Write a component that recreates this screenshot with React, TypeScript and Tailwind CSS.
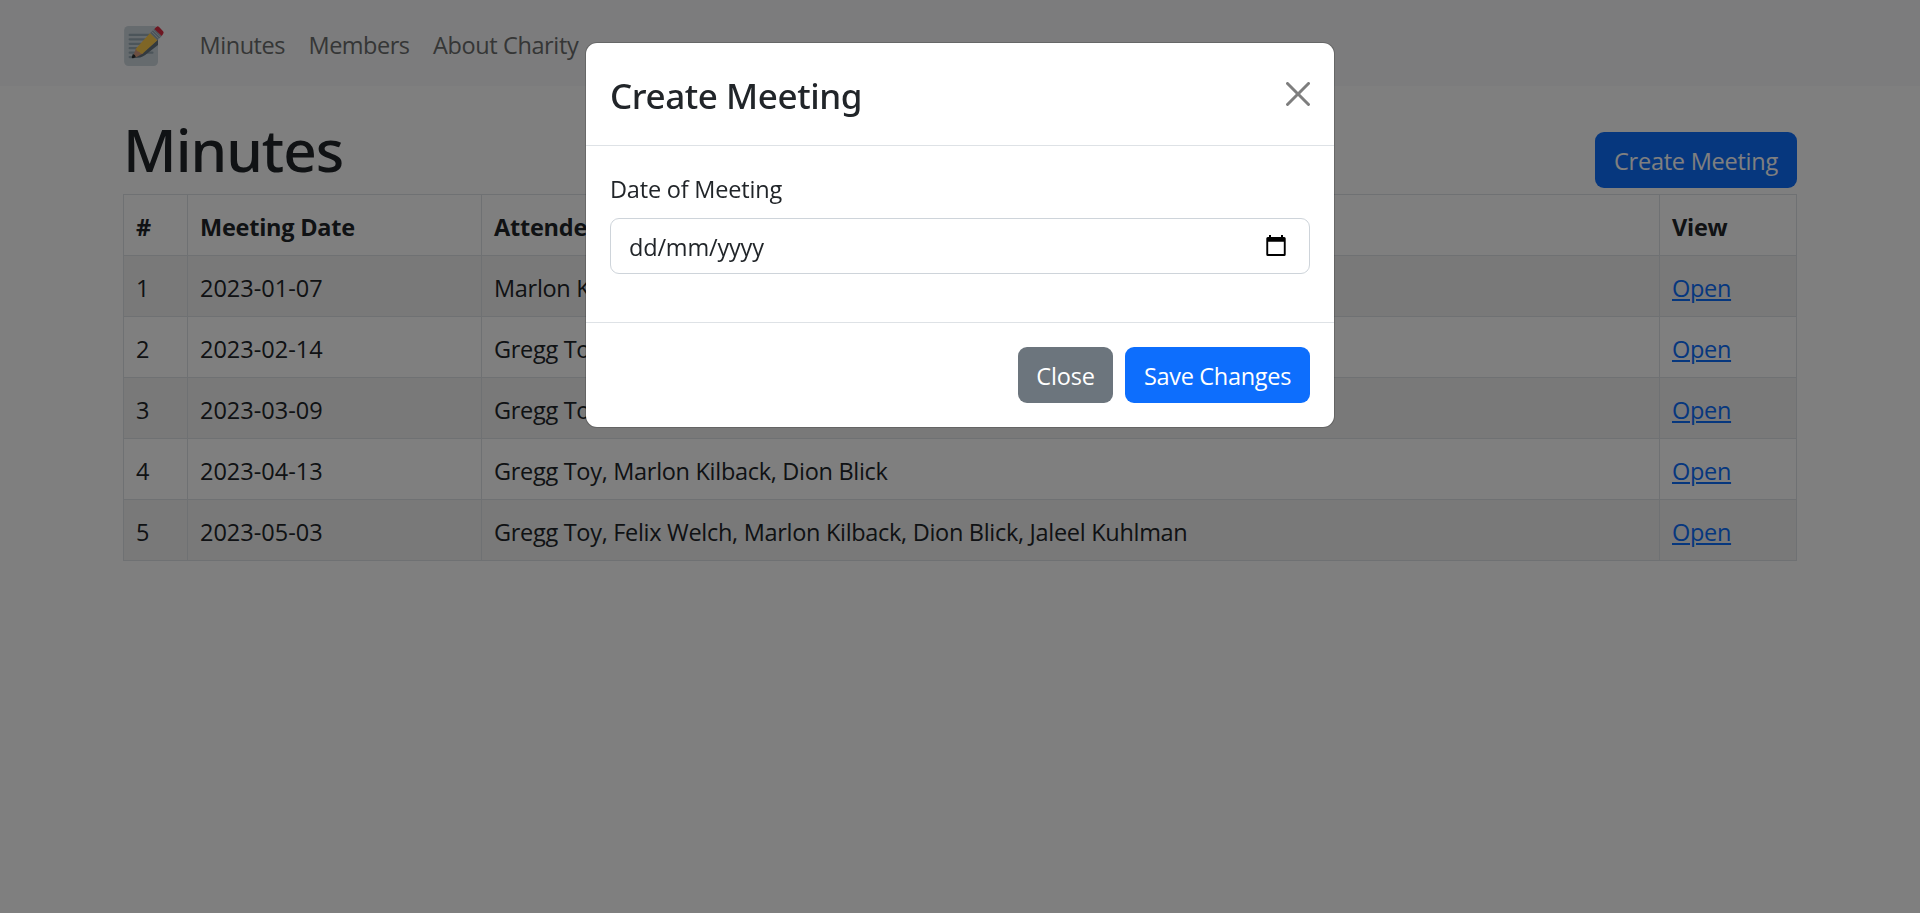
interface Meeting {
  id: number;
  date: string;
  attendees: string;
}

const meetings: Meeting[] = [
  { id: 1, date: '2023-01-07', attendees: 'Marlon Kilback, Dion Blick' },
  { id: 2, date: '2023-02-14', attendees: 'Gregg Toy, Felix Welch' },
  { id: 3, date: '2023-03-09', attendees: 'Gregg Toy, Dion Blick' },
  { id: 4, date: '2023-04-13', attendees: 'Gregg Toy, Marlon Kilback, Dion Blick' },
  { id: 5, date: '2023-05-03', attendees: 'Gregg Toy, Felix Welch, Marlon Kilback, Dion Blick, Jaleel Kuhlman' },
];

function MemoLogo() {
  return (
    <svg className="h-10 w-10 shrink-0" viewBox="0 0 36 36" overflow="visible" aria-hidden="true">
      <rect x="1" y="0" width="30.5" height="36" rx="4" fill="#ccd6dd" />
      <g stroke="#99aab5" strokeWidth="2" strokeLinecap="round">
        <path d="M6 8h18M6 12h14M6 16h10M6 20h8M6 24h20.5M6 28h4" />
      </g>
      <path d="M9.5 28.8 18 23.5 30.6 12.8 31.5 12v5.2L20 26.2q-2.4 1.8-4.6 2.2z" fill="#66757f" />
      <path d="M8.7 28.4 11.7 20 18.4 24.6 12.2 28z" fill="#d99e82" />
      <path d="M11.5 20.4 24.4 6.2 31 12.8 18 24.6q-1.8 1.3-3.2-1.1-2.6-.4-3.3-3.1z" fill="#ffcc4d" />
      <path d="M24.4 6.2 28.2 2.6 34.8 9 31 12.8z" fill="#99aab5" />
      <path d="M25.8 5 32.3 11.5M27.2 3.6 33.7 10.1" stroke="#ccd6dd" strokeWidth=".9" />
      <path d="M28.2 2.6 30 .8q1.2-1 2.5.1l3.6 3.8q1 1.2 0 2.4L34.8 9z" fill="#dd2e44" />
      <path d="M8.2 28.9q-.5-.3-.2-1.3l.9-2.5q2.2.5 2.6 2.8-2.5 1.5-3.3 1z" fill="#292f33" />
    </svg>
  );
}

function CalendarIcon() {
  return (
    <svg className="mb-px h-[21px] w-5" viewBox="0 0 20 21" aria-hidden="true">
      <path
        fillRule="evenodd"
        d="M3 0h2v2h10V0h2v2h1.2q1.5 0 1.5 1.5v16q0 1.5-1.5 1.5H1.8Q.3 21 .3 19.5v-16Q.3 2 1.800 2H3zM2.2 6.8V19h15.6V6.8z"
      />
    </svg>
  );
}

function CloseIcon() {
  return (
    <svg className="h-6 w-6" viewBox="0 0 16 16" aria-hidden="true">
      <path d="M.293.293a1 1 0 0 1 1.414 0L8 6.586 14.293.293a1 1 0 1 1 1.414 1.414L9.414 8l6.293 6.293a1 1 0 0 1-1.414 1.414L8 9.414l-6.293 6.293a1 1 0 0 1-1.414-1.414L6.586 8 .293 1.707a1 1 0 0 1 0-1.414z" />
    </svg>
  );
}

function Navbar() {
  return (
    <header className="h-[86px] bg-[#f8f9fa] pl-[123px]">
      <div className="flex h-full items-center pt-[6px]">
        <div className="w-[76.5px]">
          <MemoLogo />
        </div>
        <nav className="flex pb-[3px] text-[#6b6c6c]">
          <a href="#" className="w-[109px] whitespace-nowrap tracking-[-0.45px]">Minutes</a>
          <a href="#" className="w-[124.5px] whitespace-nowrap tracking-[-0.5px]">Members</a>
          <a href="#" className="whitespace-nowrap tracking-[-0.38px]">About Charity</a>
        </nav>
      </div>
    </header>
  );
}

function MeetingsTable() {
  return (
    <table className="w-[1674px] table-fixed border-collapse text-left [&_td]:h-[61px] [&_td]:border [&_td]:border-[#dee2e6] [&_td]:px-3 [&_td]:pt-[3px] [&_th]:h-[61px] [&_th]:border [&_th]:border-[#dee2e6] [&_th]:px-3 [&_th]:pt-[3px]">
      <colgroup>
        <col className="w-16" />
        <col className="w-[294px]" />
        <col />
        <col className="w-[137px]" />
      </colgroup>
      <thead className="tracking-[-0.24px]">
        <tr>
          <th>#</th>
          <th>Meeting Date</th>
          <th>Attendees</th>
          <th>View</th>
        </tr>
      </thead>
      <tbody>
        {meetings.map((m) => (
          <tr key={m.id} className="odd:bg-[#f2f2f2]">
            <td>{m.id}</td>
            <td>{m.date}</td>
            <td className="tracking-[-0.3px]">{m.attendees}</td>
            <td className="tracking-[-0.3px]">
              <a href="#" className="text-[#0d6efd] underline decoration-2 underline-offset-2">Open</a>
            </td>
          </tr>
        ))}
      </tbody>
    </table>
  );
}

function CreateMeetingModal() {
  return (
    <div className="fixed inset-0 flex items-start justify-center bg-black/50 pt-[42px]">
      <div
        role="dialog"
        className="flex h-[386px] w-[750px] flex-col rounded-[12px] border border-black/[.175] bg-white bg-clip-padding"
      >
        <div className="flex h-[103px] items-center justify-between border-b border-[#dee2e6] px-6">
          <h2 className="pt-1 font-['Noto_Sans',sans-serif] text-[35px] font-medium leading-[54px] tracking-[-0.42px]">
            Create Meeting
          </h2>
          <button type="button" aria-label="Close" className="opacity-50">
            <CloseIcon />
          </button>
        </div>
        <div className="flex-1 px-6 pt-[25px]">
          <label className="mb-[11px] block tracking-[-0.2px]">Date of Meeting</label>
          <div className="flex h-14 items-center justify-between rounded-[9px] border border-[#ced4da] pl-[18px] pr-[23px]">
            <span className="pt-0.5 tracking-[-0.18px]">dd/mm/yyyy</span>
            <CalendarIcon />
          </div>
        </div>
        <div className="flex h-[105px] items-start justify-end gap-3 border-t border-[#dee2e6] px-6 pt-6 text-white">
          <button type="button" className="h-14 w-[95px] rounded-[9px] bg-[#6c757d] pt-0.5 tracking-[-0.2px]">
            Close
          </button>
          <button type="button" className="h-14 w-[185px] rounded-[9px] bg-[#0d6efd] pt-0.5 tracking-[-0.3px]">
            Save Changes
          </button>
        </div>
      </div>
    </div>
  );
}

export default function App() {
  return (
    <div className="h-[913px] overflow-hidden bg-white font-['Open_Sans','Noto_Sans',sans-serif] text-[23.5px] leading-9 text-[#212529]">
      <Navbar />
      <main className="px-[123px]">
        <div className="flex h-[108px] items-end justify-between">
          <h1 className="pb-[9px] font-['Noto_Sans',sans-serif] text-[58.5px] font-medium leading-[72px] tracking-[-1px]">
            Minutes
          </h1>
          <button type="button" className="mb-[6px] h-14 w-[202px] rounded-[9px] bg-[#0d6efd] pt-0.5 tracking-[-0.25px] text-white">
            Create Meeting
          </button>
        </div>
        <MeetingsTable />
      </main>
      <CreateMeetingModal />
    </div>
  );
}
